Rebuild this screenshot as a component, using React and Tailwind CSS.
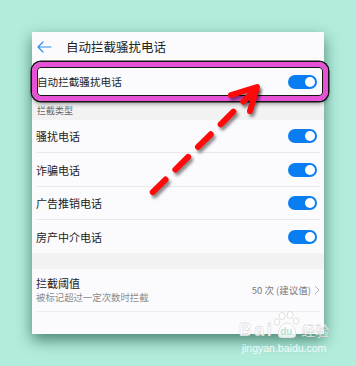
import React from "react";

const font = { fontFamily: '"Noto Sans CJK SC", "Noto Sans", sans-serif' };

function Toggle() {
  return (
    <div className="w-[29px] h-[14px] rounded-full bg-[#0a7df3] flex items-center justify-end pr-[2px]">
      <div className="w-[10px] h-[10px] rounded-full bg-white" />
    </div>
  );
}

function Row({ label, h, divider = true }) {
  return (
    <div className={`mx-[4px] flex items-center justify-between ${divider ? "border-b border-[#e9e9ec]" : ""}`} style={{ height: h }}>
      <span className="text-[11px] leading-[14px] text-[#222]">{label}</span>
      <div className="mr-[3px]">
        <Toggle />
      </div>
    </div>
  );
}

export default function App() {
  return (
    <div className="relative w-[356px] h-[366px] overflow-hidden bg-[#b1ecdc] pt-[32px] pl-[32px]" style={font}>
      <div className="w-[292px] h-[302px] bg-[#fbfbfd] shadow-[0_6px_14px_rgba(0,60,45,0.6)] flex flex-col">
        {/* header */}
        <div className="h-[30px] flex items-center pl-[5px]">
          <svg width="15" height="12" viewBox="0 0 15 12" fill="none" stroke="#2d8cf0" strokeWidth="1.2" strokeLinecap="round" strokeLinejoin="round">
            <path d="M14 6H1M6 1L1 6l5 5" />
          </svg>
          <span className="ml-[14px] text-[12.5px] leading-[16px] text-[#222]">自动拦截骚扰电话</span>
        </div>
        {/* main toggle */}
        <div className="h-[39px] flex items-center justify-between pl-[5px] pr-[7px]">
          <span className="text-[10.6px] leading-[14px] text-[#222]">自动拦截骚扰电话</span>
          <Toggle />
        </div>
        {/* section */}
        <div className="h-[19px] bg-[#f2f2f3] flex items-center pl-[5px]">
          <span className="text-[9px] leading-[12px] text-[#666]">拦截类型</span>
        </div>
        <Row label="骚扰电话" h={33} />
        <Row label="诈骗电话" h={34} />
        <Row label="广告推销电话" h={33} />
        <Row label="房产中介电话" h={33} divider={false} />
        <div className="h-[16px] bg-[#f2f2f3]" />
        <div className="mx-[4px] h-[43px] border-b border-[#eeeef0] flex items-center justify-between">
          <div className="flex flex-col">
            <span className="text-[11px] leading-[14px] text-[#222]">拦截阈值</span>
            <span className="text-[9.4px] leading-[14px] text-[#8a8a8a]">被标记超过一定次数时拦截</span>
          </div>
          <div className="flex items-center">
            <span className="text-[9.5px] leading-[12px] text-[#7a7a7a]">50 次 (建议值)</span>
            <svg className="ml-[3px]" width="6" height="10" viewBox="0 0 6 10" fill="none" stroke="#b5b5b5" strokeWidth="1">
              <path d="M1 1l4 4-4 4" />
            </svg>
          </div>
        </div>
      </div>

      {/* highlight box */}
      <div className="absolute left-[32px] top-[62px] w-[296px] h-[39px] rounded-[9px] border-[5px] border-[#e651d6] shadow-[0_0_0_1.5px_#151515,inset_0_0_0_1px_#151515,0_3px_4px_rgba(0,0,0,0.35)]" />

      {/* arrow */}
      <svg className="absolute left-0 top-0" width="356" height="366" viewBox="0 0 356 366">
        <defs>
          <filter id="sh" x="-20%" y="-20%" width="140%" height="140%">
            <feGaussianBlur stdDeviation="1.6" />
          </filter>
        </defs>
        <g transform="translate(2 3)" filter="url(#sh)" stroke="rgba(0,0,0,0.45)" fill="none" strokeWidth="6" strokeLinecap="round" strokeLinejoin="round">
          <line x1="256" y1="89" x2="149" y2="196" strokeDasharray="18 14" />
          <polyline points="231,95 257,87 250,111" />
        </g>
        <g stroke="#ff0a0a" fill="none" strokeWidth="6" strokeLinecap="round" strokeLinejoin="round">
          <line x1="256" y1="89" x2="149" y2="196" strokeDasharray="18 14" />
          <polyline points="231,95 257,87 250,111" />
        </g>
      </svg>

      {/* watermark */}
      <div className="absolute left-[238px] top-[309px] w-[92px] flex flex-col items-center text-white/85">
        <div className="relative flex items-end h-[30px]">
          <span className="text-[18px] leading-[18px] font-bold tracking-[2.5px]" style={{ fontFamily: '"Liberation Sans", Arial, sans-serif', WebkitTextStroke: "0.4px rgba(160,160,160,0.6)" }}>Bai</span>
          <div className="relative w-[26px] h-[28px]">
            <svg className="absolute left-0 top-0" width="26" height="28" viewBox="0 0 26 28" fill="rgba(255,255,255,0.85)" stroke="rgba(170,170,170,0.6)" strokeWidth="0.6">
              <ellipse cx="8" cy="5" rx="3" ry="3.5" />
              <ellipse cx="16" cy="4" rx="3" ry="3.5" />
              <ellipse cx="22" cy="10" rx="2.6" ry="3.2" />
              <ellipse cx="3" cy="11" rx="2.6" ry="3.2" />
              <path d="M4 24c0-6 4-12 9-12s9 6 9 12c0 2-2 3-4 3H8c-2 0-4-1-4-3z" />
            </svg>
            <span className="absolute left-[6px] top-[15px] text-[10px] leading-[11px] font-bold text-[#b6e3d5]" style={{ fontFamily: '"Liberation Sans", Arial, sans-serif' }}>du</span>
          </div>
          <span className="text-[14px] leading-[18px] ml-[1px]" style={{ WebkitTextStroke: "0.3px rgba(160,160,160,0.6)" }}>经验</span>
        </div>
        <span className="mt-[3px] text-[10.5px] leading-[12px]" style={{ fontFamily: '"Liberation Sans", Arial, sans-serif' }}>jingyan.baidu.com</span>
      </div>
    </div>
  );
}
